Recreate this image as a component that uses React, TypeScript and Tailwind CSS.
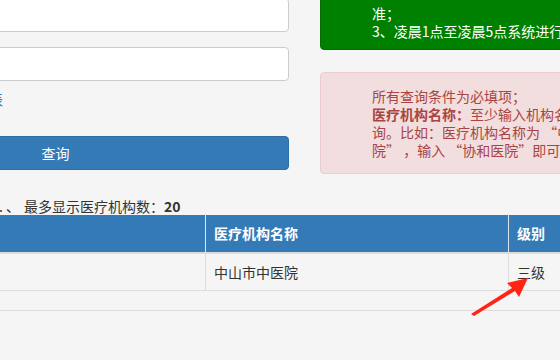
export default function App() {
  const font = { fontFamily: '"Noto Sans CJK SC", "Open Sans", sans-serif' };
  return (
    <div
      className="relative w-[560px] h-[360px] overflow-hidden bg-[#f5f5f5] text-[14px] text-[#333] [text-spacing-trim:space-all]"
      style={font}
    >
      <div className="ml-[-178px] w-[1000px]">
        <div className="flex items-start">
          {/* query form */}
          <div className="w-[467px] mt-[-2px] flex flex-col">
            <div className="h-[34px] rounded-[4px] border border-[#ccc] bg-white" />
            <div className="h-[34px] mt-[15px] rounded-[4px] border border-[#ccc] bg-white" />
            <div className="mt-[8px] h-[20px] w-[181px] flex justify-end leading-[20px] text-[#337ab7] whitespace-nowrap">
              医疗机构列表
            </div>
            <button className="mt-[27px] h-[34px] rounded-[4px] border border-[#2e6da4] bg-[#337ab7] text-white text-[14px]">
              查询
            </button>
          </div>

          {/* notices */}
          <div className="ml-[31px] w-[420px] flex flex-col">
            <div className="mt-[-29px] rounded-[4px] border border-[#0a6b0a] bg-[#008000] text-white pt-[32px] pb-[9px] pl-[51px] leading-[18px] whitespace-nowrap">
              <div>准；</div>
              <div>3、凌晨1点至凌晨5点系统进行维护，暂停查询服务。</div>
            </div>
            <div className="mt-[22px] rounded-[4px] border border-[#ebccd1] bg-[#f2dede] text-[#a94442] pt-[14px] pb-[14px] pl-[51px] leading-[18px] whitespace-nowrap">
              <div>所有查询条件为必填项；</div>
              <div>
                <span className="font-bold">医疗机构名称：</span>至少输入机构名称中连续的四个字进行查
              </div>
              <div>询。比如：医疗机构名称为 “中国医学科学院北京协和医</div>
              <div>院” ，输入 “协和医院”即可。</div>
            </div>
          </div>
        </div>

        {/* result summary */}
        <div className="mt-[23px] h-[18px] flex items-center leading-[18px] whitespace-nowrap">
          <div className="w-[181px] flex justify-end">查询到医疗机构数：1.</div>
          <span className="ml-[3px]">、</span>
          <span className="ml-[4px]">最多显示医疗机构数：</span>
          <span className="font-bold">20</span>
        </div>

        {/* result table */}
        <div className="flex flex-col">
          <div className="flex h-[39px] bg-[#337ab7] border-b-2 border-[#ddd] text-white font-bold">
            <div className="w-[384px] border-r border-[#dde6ef]" />
            <div className="w-[303px] border-r border-[#dde6ef] pl-[8px] flex items-center">医疗机构名称</div>
            <div className="flex-1 pl-[8px] flex items-center">级别</div>
          </div>
          <div className="flex h-[37px] border-b border-[#ddd]">
            <div className="w-[384px] border-r border-[#ddd]" />
            <div className="w-[303px] border-r border-[#ddd] pl-[8px] flex items-center">中山市中医院</div>
            <div className="flex-1 pl-[8px] flex items-center">三级</div>
          </div>
          <div className="h-[20px] border-b border-[#ddd]" />
        </div>
      </div>

      {/* annotation arrow */}
      <svg className="absolute left-0 top-0 pointer-events-none" width="560" height="360">
        <polygon points="471,314 512,288 507,283 528,278 519,297 515,291 474,316" fill="#ff2414" />
      </svg>
    </div>
  );
}
